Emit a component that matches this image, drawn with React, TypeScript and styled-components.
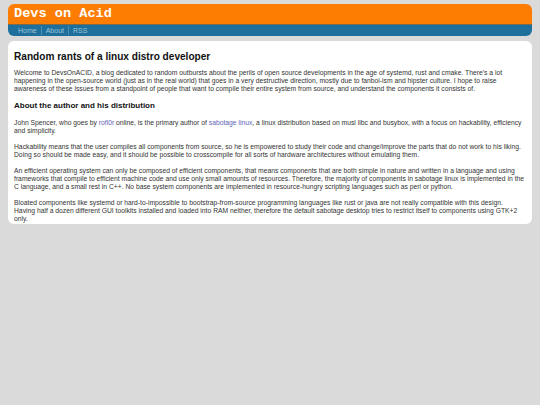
import { createGlobalStyle, styled } from "styled-components";

const GlobalStyle = createGlobalStyle`
  html, body {
    margin: 0;
    padding: 0;
    background: #dadada;
  }
  body {
    font-family: "Liberation Sans", Arial, sans-serif;
    color: #222;
  }
`;

const Page = styled.div`
  padding: 4px 8px 8px;
  display: flex;
  flex-direction: column;
  gap: 5px;
`;

const Header = styled.header`
  border-radius: 6px;
  overflow: hidden;
`;

const TitleBar = styled.div`
  background: #fd7d03;
  height: 20px;
  display: flex;
  align-items: center;
  padding-left: 6px;
`;

const SiteTitle = styled.h1`
  margin: 0;
  font-family: "Liberation Mono", "Courier New", monospace;
  font-weight: bold;
  font-size: 13.6px;
  color: #fff;
  line-height: 1;
`;

const Nav = styled.nav`
  background: #1e6f9b;
  border-top: 1px solid #7a6a4a;
  height: 11px;
  display: flex;
  align-items: center;
  padding-left: 10px;
`;

const NavLink = styled.a`
  font-size: 7px;
  color: #9cc3d8;
  text-decoration: none;
  padding: 0 4px;
  line-height: 9px;
  &:first-child {
    padding-left: 0;
  }
  & + & {
    border-left: 1px solid #4d8db0;
  }
`;

const Content = styled.main`
  background: #fff;
  border-radius: 6px;
  padding: 9px 6px 0;
`;

const Heading = styled.h2`
  margin: 0 0 5px;
  font-size: 10.1px;
  line-height: 14px;
  color: #111;
`;

const SubHeading = styled.h3`
  margin: 0 0 8px;
  font-size: 8px;
  line-height: 10px;
  color: #111;
`;

const Para = styled.p`
  margin: 0 0 8px;
  font-size: 6.75px;
  line-height: 8px;
  color: #333;
  &:last-child {
    margin-bottom: 0;
    padding-bottom: 1px;
  }
`;

const Link = styled.a`
  color: #6363b8;
  text-decoration: none;
`;

export default function App() {
  return (
    <>
      <GlobalStyle />
      <Page>
        <Header>
          <TitleBar>
            <SiteTitle>Devs on Acid</SiteTitle>
          </TitleBar>
          <Nav>
            <NavLink href="#">Home</NavLink>
            <NavLink href="#">About</NavLink>
            <NavLink href="#">RSS</NavLink>
          </Nav>
        </Header>
        <Content>
          <Heading>Random rants of a linux distro developer</Heading>
          <Para>
            Welcome to DevsOnACID, a blog dedicated to random outbursts about the perils of open source
            developments in the age of systemd, rust and cmake. There's a lot happening in the open-source
            world (just as in the real world) that goes in a very destructive direction, mostly due to
            fanboi-ism and hipster culture. I hope to raise awareness of these issues from a standpoint of
            people that want to compile their entire system from source, and understand the components it
            consists of.
          </Para>
          <SubHeading>About the author and his distribution</SubHeading>
          <Para>
            John Spencer, who goes by <Link href="#">rofl0r</Link> online, is the primary author of{" "}
            <Link href="#">sabotage linux</Link>, a linux distribution based on musl libc and busybox, with a
            focus on hackability, efficiency and simplicity.
          </Para>
          <Para>
            Hackability means that the user compiles all components from source, so he is empowered to study
            their code and change/improve the parts that do not work to his liking. Doing so should be made
            easy, and it should be possible to crosscompile for all sorts of hardware architectures without
            emulating them.
          </Para>
          <Para>
            An efficient operating system can only be composed of efficient components, that means components
            that are both simple in nature and written in a language and using frameworks that compile to
            efficient machine code and use only small amounts of resources. Therefore, the majority of
            components in sabotage linux is implemented in the C language, and a small rest in C++. No base
            system components are implemented in resource-hungry scripting languages such as perl or python.
          </Para>
          <Para>
            Bloated components like systemd or hard-to-impossible to bootstrap-from-source programming
            languages like rust or java are not really compatible with this design.
            <br />
            Having half a dozen different GUI toolkits installed and loaded into RAM neither, therefore the
            default sabotage desktop tries to restrict itself to components using GTK+2 only.
          </Para>
        </Content>
      </Page>
    </>
  );
}
